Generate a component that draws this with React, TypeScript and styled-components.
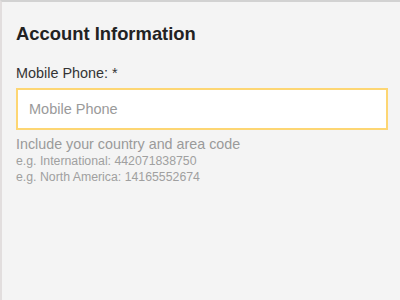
import styled, { createGlobalStyle } from "styled-components";

const GlobalStyle = createGlobalStyle`
  html, body {
    margin: 0;
    padding: 0;
    background: #f4f4f4;
  }
`;

const App = () => (
  <>
    <GlobalStyle />
    <Panel>
      <Title>Account Information</Title>
      <Field>
        <Label>Mobile Phone: *</Label>
        <PhoneInput placeholder="Mobile Phone" />
        <Hint>Include your country and area code</Hint>
        <Example>e.g. International: 442071838750</Example>
        <Example>e.g. North America: 14165552674</Example>
      </Field>
    </Panel>
  </>
);

export default App;

const Panel = styled.div`
  box-sizing: border-box;
  width: 400px;
  height: 300px;
  background: #f4f4f4;
  border-top: 2px solid #d2d2d2;
  border-left: 2px solid #e2dede;
  padding: 20px 13px 0 14px;
  font-family: "Liberation Sans", Arial, sans-serif;
`;

const Title = styled.h2`
  margin: 0 0 19px;
  font-size: 18.4px;
  line-height: 24px;
  font-weight: bold;
  color: #222;
`;

const Field = styled.div`
  display: flex;
  flex-direction: column;
`;

const Label = styled.label`
  font-size: 14.4px;
  line-height: 16px;
  color: #333;
  margin-bottom: 7px;
`;

const PhoneInput = styled.input`
  box-sizing: border-box;
  width: 372px;
  height: 42px;
  border: 2px solid #fdd673;
  background: #fff;
  padding: 0 11px;
  font-family: inherit;
  font-size: 14.5px;
  outline: none;
  &::placeholder {
    color: #9a9a9a;
  }
`;

const Hint = styled.div`
  margin-top: 5px;
  font-size: 14.3px;
  line-height: 18px;
  color: #9a9a9a;
`;

const Example = styled.div`
  font-size: 12.3px;
  line-height: 16px;
  color: #a0a0a0;
`;
